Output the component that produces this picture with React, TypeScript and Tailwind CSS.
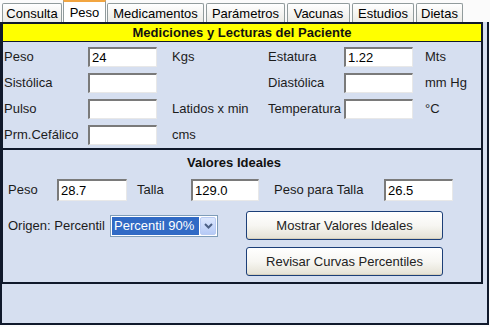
import React, { useState } from 'react'

const tabs = [
  { name: 'Consulta', w: 'w-[60px]' },
  { name: 'Peso', w: 'w-[43px]' },
  { name: 'Medicamentos', w: 'w-[97px]' },
  { name: 'Parámetros', w: 'w-[79px]' },
  { name: 'Vacunas', w: 'w-[63px]' },
  { name: 'Estudios', w: 'w-[62px]' },
  { name: 'Dietas', w: 'w-[47px]' },
]

function Field({ value, w, h }: { value?: string; w: string; h: string }) {
  return (
    <div
      className={`${w} ${h} bg-white border-t-2 border-l-2 border-b border-r border-t-[#7a7a7a] border-l-[#7a7a7a] border-b-[#e8e8e8] border-r-[#e8e8e8] pl-[2px] flex items-center text-[13px] text-black leading-none`}
    >
      {value}
    </div>
  )
}

function XpButton({ label }: { label: string }) {
  return (
    <button className="w-[197px] h-[29px] rounded-[3px] border border-[#1c3f78] bg-gradient-to-b from-white via-[#f7f6f2] to-[#e4e1d4] text-[13px] text-[#222] shadow-[inset_0_-1px_0_#d6d0bd]">
      {label}
    </button>
  )
}

function App() {
  const [active, setActive] = useState('Peso')

  return (
    <div
      className="w-[490px] h-[327px] bg-[#fbfbfb] overflow-hidden text-[#1c1c1c]"
      style={{ fontFamily: '"Liberation Sans", Arial, sans-serif' }}
    >
      {/* tab strip */}
      <div className="h-[22px] flex items-end pl-[2px] gap-[2px]">
        {tabs.map((t) => {
          const on = t.name === active
          return (
            <div
              key={t.name}
              onClick={() => setActive(t.name)}
              className={
                on
                  ? `${t.w} h-[22px] -mx-[1px] bg-white border-x border-[#919b9c] border-t-2 border-t-[#f2a540] text-[13px] text-black flex items-center justify-center pt-[1px]`
                  : `${t.w} h-[19px] bg-gradient-to-b from-white to-[#ecebe6] border-x border-t border-[#919b9c] rounded-t-[2px] text-[13px] text-black flex items-center justify-center pt-[1px]`
              }
            >
              {t.name}
            </div>
          )
        })}
      </div>

      {/* frame */}
      <div className="w-[489px] h-[303px] border-2 border-t-0 border-[#10192b] bg-[#d6dff0]">
        {/* Mediciones */}
        <div className="w-[481px] border-2 border-l border-[#10192b]">
          <div className="h-[18px] bg-[#ffff00] border-b border-[#10192b] text-center font-bold text-[13px] leading-[18px] text-[#111]">
            Mediciones y Lecturas del Paciente
          </div>
          <div className="pt-[5px] pb-[3px] pl-[1px] grid grid-cols-[84px_69px_111px_76px_69px_auto] gap-y-[6px] items-center text-[13px]">
            <span>Peso</span>
            <Field value="24" w="w-[69px]" h="h-[20px]" />
            <span className="pl-[15px]">Kgs</span>
            <span>Estatura</span>
            <Field value="1.22" w="w-[69px]" h="h-[20px]" />
            <span className="pl-[12px]">Mts</span>

            <span>Sistólica</span>
            <Field w="w-[69px]" h="h-[20px]" />
            <span />
            <span>Diastólica</span>
            <Field w="w-[69px]" h="h-[20px]" />
            <span className="pl-[12px]">mm Hg</span>

            <span>Pulso</span>
            <Field w="w-[69px]" h="h-[20px]" />
            <span className="pl-[15px]">Latidos x min</span>
            <span>Temperatura</span>
            <Field w="w-[69px]" h="h-[20px]" />
            <span className="pl-[12px]">°C</span>

            <span>Prm.Cefálico</span>
            <Field w="w-[69px]" h="h-[20px]" />
            <span className="pl-[15px]">cms</span>
          </div>
        </div>

        {/* Valores Ideales */}
        <div className="w-[481px] h-[134px] border-2 border-t-0 border-l border-[#10192b] text-[13px]">
          <div className="pt-[4px] pr-[16px] text-center font-bold leading-[17px] text-[#111]">Valores Ideales</div>
          <div className="mt-[8px] flex items-center pl-[5px]">
            <span className="w-[49px]">Peso</span>
            <Field value="28.7" w="w-[70px]" h="h-[22px]" />
            <span className="ml-[10px] w-[54px]">Talla</span>
            <Field value="129.0" w="w-[68px]" h="h-[22px]" />
            <span className="ml-[15px] w-[110px]">Peso para Talla</span>
            <Field value="26.5" w="w-[69px]" h="h-[22px]" />
          </div>
          <div className="mt-[10px] flex items-start pl-[5px]">
            <div className="flex items-center h-[29px]">
              <span className="w-[102px]">Origen: Percentil</span>
              <div className="w-[108px] h-[22px] bg-white border border-[#7f9db9] flex items-center p-[1px]">
                <div className="flex-1 h-full bg-[#316ac5] text-white text-[13px] leading-[18px] pl-[2px]">
                  Percentil 90%
                </div>
                <div className="w-[16px] h-full ml-[1px] rounded-[2px] bg-gradient-to-b from-[#dce7fd] to-[#b6caf6] border border-[#b9cbf3] flex items-center justify-center">
                  <svg width="9" height="6" viewBox="0 0 9 6">
                    <path d="M1 1 L4.5 4.5 L8 1" fill="none" stroke="#4d6185" strokeWidth="2" />
                  </svg>
                </div>
              </div>
            </div>
            <div className="ml-[28px] flex flex-col gap-[7px]">
              <XpButton label="Mostrar Valores Ideales" />
              <XpButton label="Revisar Curvas Percentiles" />
            </div>
          </div>
        </div>
      </div>
    </div>
  )
}

export default App
